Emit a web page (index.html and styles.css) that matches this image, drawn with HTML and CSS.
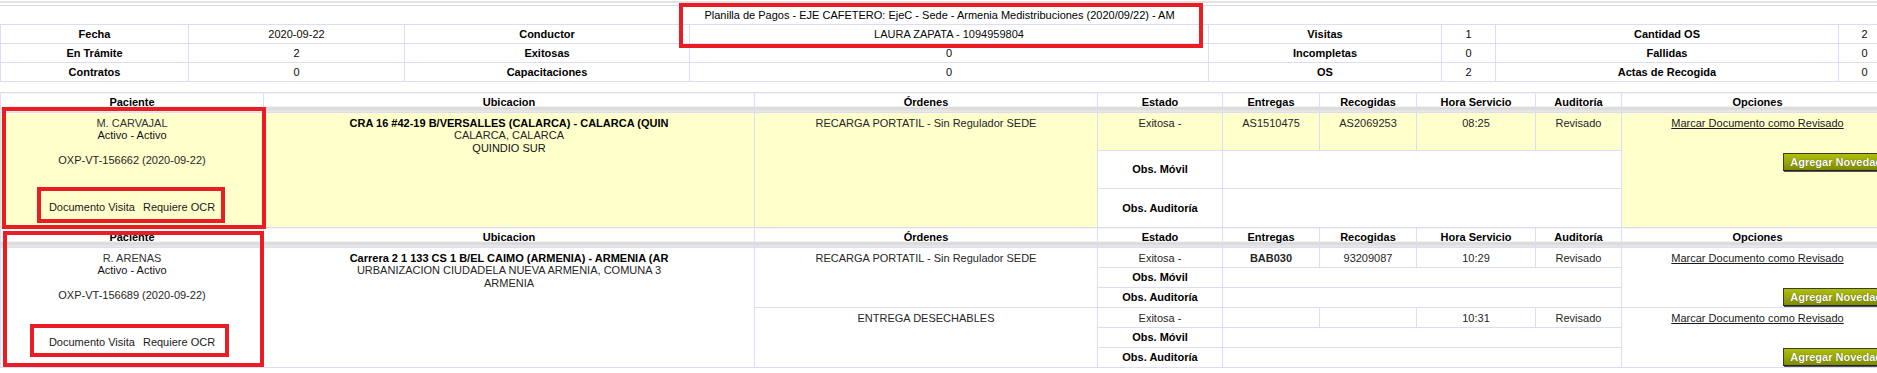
FILE: index.html
```html
<!DOCTYPE html>
<html lang="es">
<head>
<meta charset="utf-8">
<title>Planilla de Pagos</title>
<link rel="stylesheet" href="styles.css">
</head>
<body>
<div class="page">
  <div class="topline"></div>

  <table class="info">
    <colgroup>
      <col class="i1"><col class="i2"><col class="i3"><col class="i4">
      <col class="i5"><col class="i6"><col class="i7"><col class="i8">
    </colgroup>
    <tr>
      <td colspan="8" class="title">Planilla de Pagos - EJE CAFETERO: EjeC - Sede - Armenia Medistribuciones (2020/09/22) - AM</td>
    </tr>
    <tr>
      <th>Fecha</th><td>2020-09-22</td>
      <th>Conductor</th><td>LAURA ZAPATA - 1094959804</td>
      <th>Visitas</th><td>1</td>
      <th>Cantidad OS</th><td>2</td>
    </tr>
    <tr>
      <th>En Trámite</th><td>2</td>
      <th>Exitosas</th><td>0</td>
      <th>Incompletas</th><td>0</td>
      <th>Fallidas</th><td>0</td>
    </tr>
    <tr>
      <th>Contratos</th><td>0</td>
      <th>Capacitaciones</th><td>0</td>
      <th>OS</th><td>2</td>
      <th>Actas de Recogida</th><td>0</td>
    </tr>
  </table>

  <table class="planilla">
    <colgroup>
      <col class="p1"><col class="p2"><col class="p3"><col class="p4"><col class="p5">
      <col class="p6"><col class="p7"><col class="p8"><col class="p9">
    </colgroup>

    <tr class="head">
      <th>Paciente</th><th>Ubicacion</th><th>Órdenes</th><th>Estado</th><th>Entregas</th>
      <th>Recogidas</th><th>Hora Servicio</th><th>Auditoría</th><th>Opciones</th>
    </tr>
    <tr class="hl r1a">
      <td rowspan="3" class="pac">
        <div class="pname">M. CARVAJAL</div>
        <div class="pstate">Activo - Activo</div>
        <div class="pcode">OXP-VT-156662 (2020-09-22)</div>
        <div class="pdocs"><a href="#">Documento Visita</a><a href="#">Requiere OCR</a></div>
      </td>
      <td rowspan="3" class="ubi">
        <div class="street">CRA 16 #42-19 B/VERSALLES (CALARCA) - CALARCA (QUIN</div>
        <div>CALARCA, CALARCA</div>
        <div class="zone">QUINDIO SUR</div>
      </td>
      <td rowspan="3" class="ord">RECARGA PORTATIL - Sin Regulador SEDE</td>
      <td class="dat">Exitosa -</td>
      <td class="dat">AS1510475</td>
      <td class="dat">AS2069253</td>
      <td class="dat">08:25</td>
      <td class="dat">Revisado</td>
      <td rowspan="3" class="opc">
        <div class="opc-in">
          <a href="#" class="mark">Marcar Documento como Revisado</a>
          <button type="button" class="btn">Agregar Novedad</button>
        </div>
      </td>
    </tr>
    <tr class="obs r1b"><th>Obs. Móvil</th><td colspan="4"></td></tr>
    <tr class="obs r1c"><th>Obs. Auditoría</th><td colspan="4"></td></tr>

    <tr class="head">
      <th>Paciente</th><th>Ubicacion</th><th>Órdenes</th><th>Estado</th><th>Entregas</th>
      <th>Recogidas</th><th>Hora Servicio</th><th>Auditoría</th><th>Opciones</th>
    </tr>
    <tr class="r2">
      <td rowspan="6" class="pac">
        <div class="pname">R. ARENAS</div>
        <div class="pstate">Activo - Activo</div>
        <div class="pcode">OXP-VT-156689 (2020-09-22)</div>
        <div class="pdocs"><a href="#">Documento Visita</a><a href="#">Requiere OCR</a></div>
      </td>
      <td rowspan="6" class="ubi">
        <div class="street">Carrera 2 1 133 CS 1 B/EL CAIMO (ARMENIA) - ARMENIA (AR</div>
        <div>URBANIZACION CIUDADELA NUEVA ARMENIA, COMUNA 3</div>
        <div>ARMENIA</div>
      </td>
      <td rowspan="3" class="ord">RECARGA PORTATIL - Sin Regulador SEDE</td>
      <td class="dat">Exitosa -</td>
      <td class="dat strong">BAB030</td>
      <td class="dat">93209087</td>
      <td class="dat">10:29</td>
      <td class="dat">Revisado</td>
      <td rowspan="3" class="opc">
        <div class="opc-in">
          <a href="#" class="mark">Marcar Documento como Revisado</a>
          <button type="button" class="btn">Agregar Novedad</button>
        </div>
      </td>
    </tr>
    <tr class="obs r2"><th>Obs. Móvil</th><td colspan="4"></td></tr>
    <tr class="obs r2"><th>Obs. Auditoría</th><td colspan="4"></td></tr>
    <tr class="r2">
      <td rowspan="3" class="ord">ENTREGA DESECHABLES</td>
      <td class="dat">Exitosa -</td>
      <td class="dat"></td>
      <td class="dat"></td>
      <td class="dat">10:31</td>
      <td class="dat">Revisado</td>
      <td rowspan="3" class="opc">
        <div class="opc-in">
          <a href="#" class="mark">Marcar Documento como Revisado</a>
          <button type="button" class="btn">Agregar Novedad</button>
        </div>
      </td>
    </tr>
    <tr class="obs r2"><th>Obs. Móvil</th><td colspan="4"></td></tr>
    <tr class="obs r2"><th>Obs. Auditoría</th><td colspan="4"></td></tr>
  </table>

  <div class="mark-box box-title"></div>
  <div class="mark-box box-pac1"></div>
  <div class="mark-box box-docs1"></div>
  <div class="mark-box box-pac2"></div>
  <div class="mark-box box-docs2"></div>
</div>
</body>
</html>
```

FILE: styles.css
```css
html, body {
  margin: 0;
  padding: 0;
  overflow: hidden;
  background: #ffffff;
}

body {
  font-family: "Liberation Sans", Arial, sans-serif;
  font-size: 11px;
  line-height: 12.4px;
  color: #262626;
}

.page {
  position: relative;
  width: 1893px;
  padding-top: 1px;
}

.topline {
  height: 2px;
  background: #e2e2e2;
  margin-bottom: 2px;
}

table {
  border-collapse: collapse;
  table-layout: fixed;
}

/* ---------- summary table ---------- */
.info { width: 1890px; }
.i1 { width: 188px; }
.i2 { width: 216px; }
.i3 { width: 285px; }
.i4 { width: 519px; }
.i5 { width: 233px; }
.i6 { width: 54px; }
.i7 { width: 343px; }
.i8 { width: 52px; }

.info td,
.info th {
  border: 1px solid #dcdcf4;
  height: 18px;
  padding: 0;
  text-align: center;
  vertical-align: middle;
}

.info th {
  font-weight: bold;
  color: #000000;
}

.info td { color: #0a0a0a; }

.info .title {
  padding-right: 12px;
  color: #000000;
  border-left-color: #ffffff;
  border-right-color: #ffffff;
}

/* ---------- main table ---------- */
.planilla {
  width: 1893px;
  margin-top: 10px;
}

.p1 { width: 263px; }
.p2 { width: 491px; }
.p3 { width: 343px; }
.p4 { width: 125px; }
.p5 { width: 97px; }
.p6 { width: 97px; }
.p7 { width: 119px; }
.p8 { width: 86px; }
.p9 { width: 272px; }

.planilla td,
.planilla th {
  border: 1px solid #dcdcf4;
  padding: 0;
  text-align: center;
}

.head th {
  height: 19px;
  font-weight: bold;
  color: #000000;
  vertical-align: middle;
  background: linear-gradient(to bottom, #ffffff 0%, #ffffff 66%, #d6d6d6 74%, #ececec 100%);
}

.planilla td.pac,
.planilla td.ubi,
.planilla td.ord,
.planilla td.dat,
.planilla td.opc {
  vertical-align: top;
  padding-top: 4px;
}

.hl td { background: #ffffcc; }

.r1a td.dat { height: 33px; }
.r1b th, .r1b td { height: 37px; }
.r1c th, .r1c td { height: 38px; }
.r2 td.dat { height: 15px; }
.r2 th, .r2 td { height: 19px; }

.obs th {
  font-weight: bold;
  color: #000000;
  vertical-align: middle;
  background: #ffffff;
}

.obs td { background: #ffffff; }

.pname { color: #333333; }
.pstate { color: #111111; }
.pcode { margin-top: 12px; }
.pdocs {
  margin-top: 35px;
  display: flex;
  justify-content: center;
  gap: 8px;
}
.pdocs a {
  color: #1a1a1a;
  text-decoration: none;
}

.street {
  font-weight: bold;
  color: #000000;
  white-space: nowrap;
  overflow: hidden;
}
.zone { color: #111111; }

.strong {
  font-weight: bold;
}

.opc-in {
  display: flex;
  flex-direction: column;
  align-items: center;
}

.mark {
  color: #1a1a1a;
  text-decoration: underline;
}

.btn {
  align-self: flex-end;
  margin: 24px 4px 0 0;
  height: 18px;
  padding: 0 6px;
  font-family: "Liberation Sans", Arial, sans-serif;
  font-size: 11px;
  font-weight: bold;
  line-height: 14px;
  color: #ffffff;
  text-shadow: 0 0 1px #3a4000;
  background: linear-gradient(to bottom, #b0bd10 0%, #9aa800 50%, #7f8b00 100%);
  border: 1px solid #3c3c2c;
  border-right-color: #222222;
  border-bottom-color: #222222;
  box-shadow: 1px 1px 0 #555555;
  cursor: pointer;
}

/* ---------- annotation rectangles ---------- */
.mark-box {
  position: absolute;
  border: 4px solid #ea1c24;
  box-sizing: border-box;
  pointer-events: none;
}

.box-title { left: 679px; top: 3px; width: 524px; height: 45px; }
.box-pac1 { left: 2px; top: 107px; width: 264px; height: 122px; }
.box-docs1 { left: 37px; top: 187px; width: 188px; height: 36px; }
.box-pac2 { left: 3px; top: 231px; width: 261px; height: 136px; }
.box-docs2 { left: 30px; top: 324px; width: 199px; height: 33px; }
```
